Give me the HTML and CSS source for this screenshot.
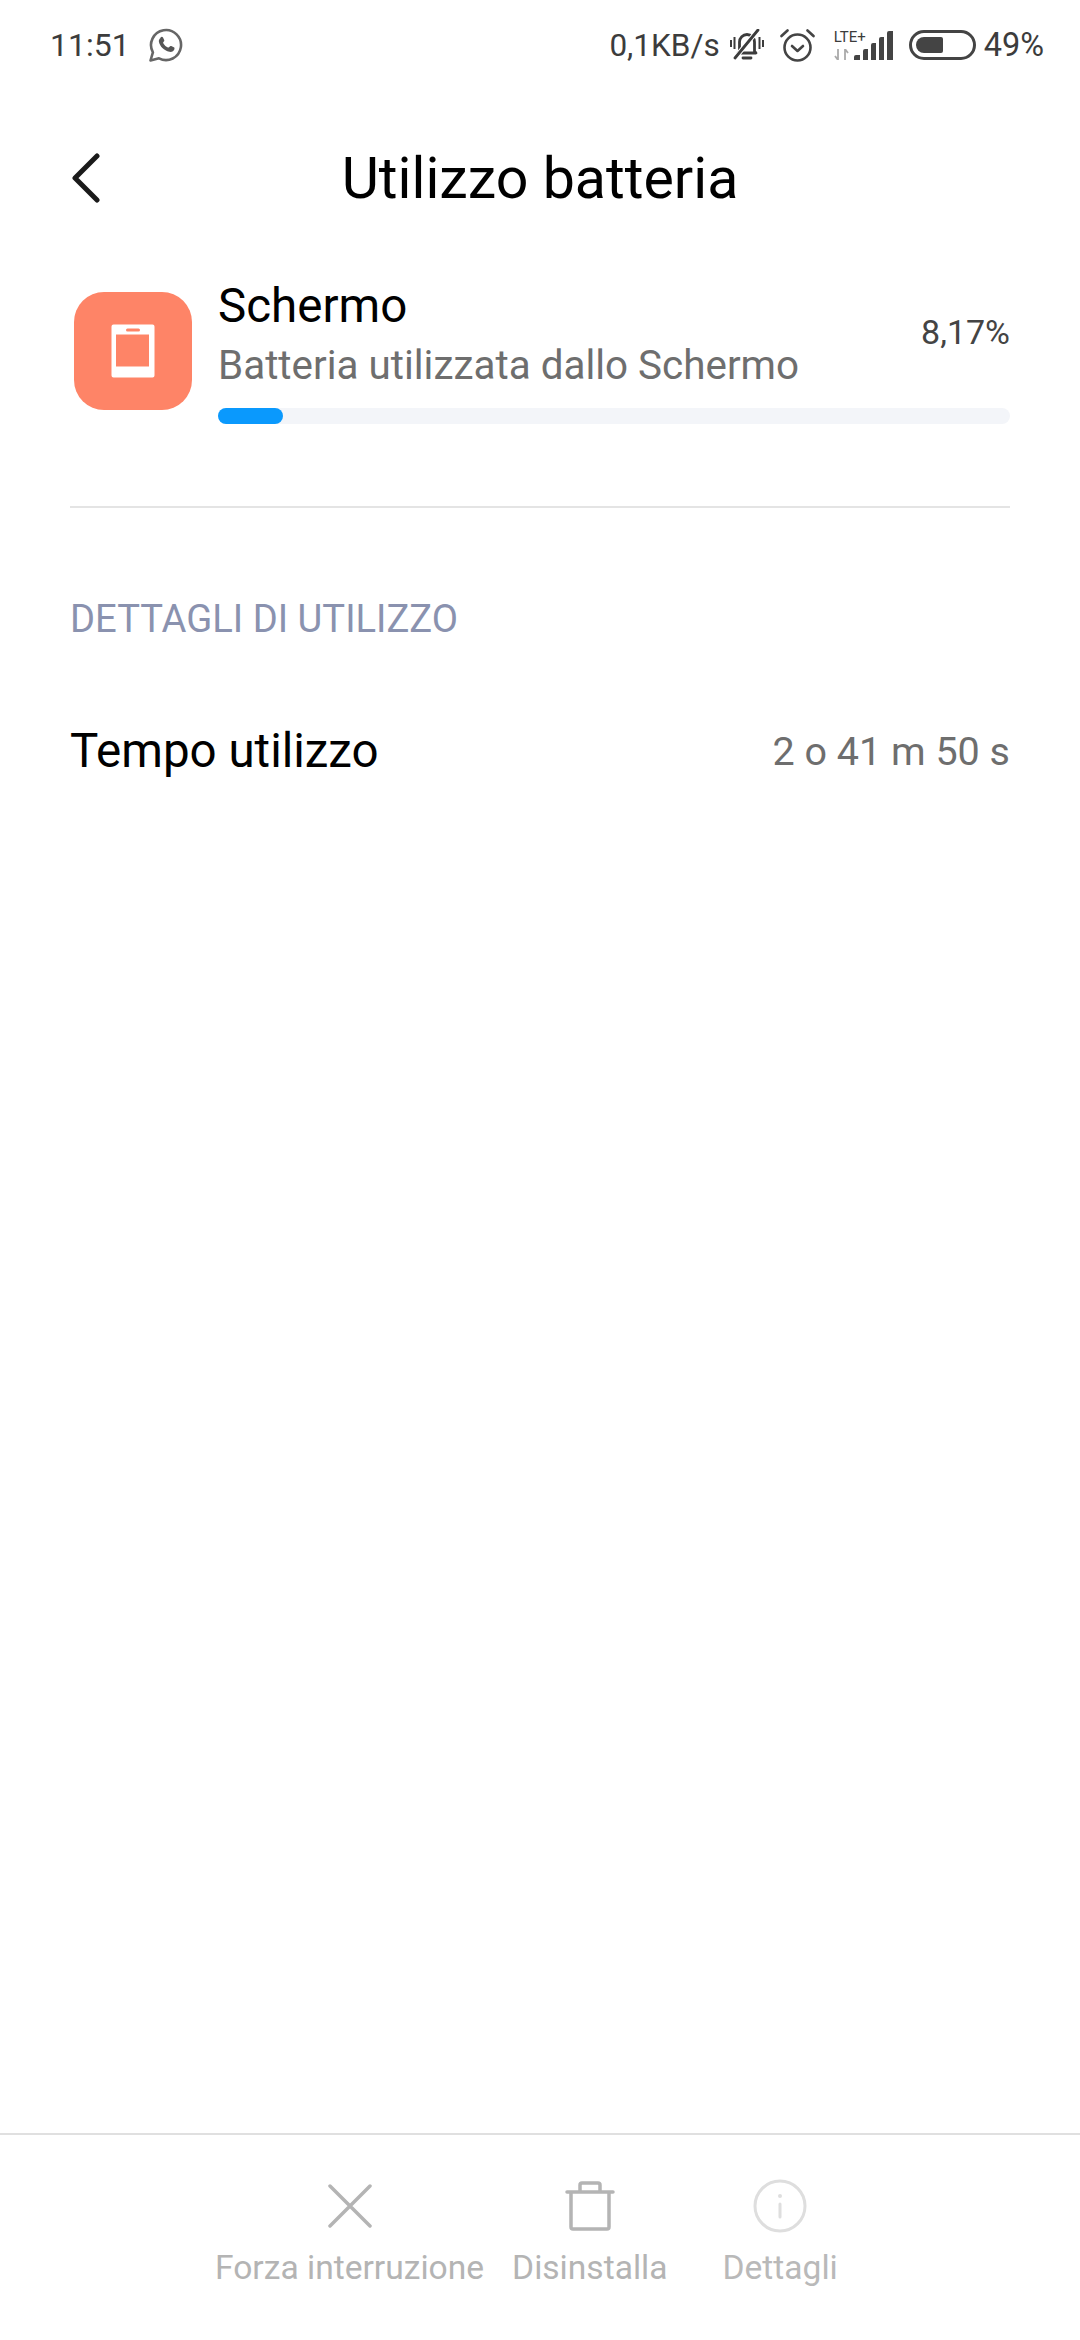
FILE: index.html
```html
<!DOCTYPE html>
<html lang="it">
<head>
    <meta charset="UTF-8">
    <title>Utilizzo batteria</title>
    <link rel="stylesheet" href="styles.css">
</head>
<body>
    <div class="status-bar">
        <div class="status-left">
            <span class="clock">11:51</span>
            <svg class="wa-icon" width="34" height="34" viewBox="0 0 34 34">
                <path d="M1.500 32.500l2.400-8.200A15 15 0 1 1 10 30.300z" fill="none" stroke="#666" stroke-width="2.600" stroke-linejoin="round"/>
                <path d="M11.500 9.500c1-1 2-.8 2.500 0l1.200 2.400c.3.700 0 1.200-.8 2.100-.4.400-.4.800 0 1.400 1.200 1.900 2.600 3.100 4.500 4 .6.300 1 .2 1.400-.3.900-1.100 1.300-1.300 2-1l2.500 1.200c.8.400.8 1 .6 2-.5 2-3 3-5 2.500-5.500-1.300-9.500-5.300-10.500-10-.3-1.600.4-3.100 1.600-3.900z" fill="#555"/>
            </svg>
        </div>
        <div class="status-right">
            <span class="speed">0,1KB/s</span>
            <svg width="34" height="32" viewBox="0 0 34 32" class="st-bell">
                <path d="M8 24l1.500-2V13a7.500 7.500 0 0 1 15 0v9l1.500 2z" fill="none" stroke="#3c3c3c" stroke-width="2.800" stroke-linejoin="round"/>
                <path d="M13 29h8" stroke="#3c3c3c" stroke-width="2.800" stroke-linecap="round"/>
                <path d="M28 1L5 29" stroke="#fff" stroke-width="5"/>
                <path d="M28 1L5 29" stroke="#3c3c3c" stroke-width="2.800" stroke-linecap="round"/>
                <path d="M1 11v7M4.500 8v12M29.500 8v12M33 11v7" stroke="#3c3c3c" stroke-width="2"/>
            </svg>
            <svg width="35" height="34" viewBox="0 0 35 34" class="st-alarm">
                <circle cx="17.500" cy="19.500" r="13" fill="none" stroke="#444" stroke-width="2.600"/>
                <path d="M12 18l5.500 5 5.500-5" fill="none" stroke="#444" stroke-width="2.600" stroke-linecap="round" stroke-linejoin="round"/>
                <path d="M1.500 8l6-5.500M33.500 8l-6-5.500" stroke="#444" stroke-width="2.600" stroke-linecap="round"/>
            </svg>
            <div class="signal">
                <div class="net">
                    <span class="lte">LTE+</span>
                    <svg width="15" height="11" viewBox="0 0 15 11"><path d="M4 0v11M4 11L1 7M11 11V0M11 0l3 4" fill="none" stroke="#aaa" stroke-width="1.800"/></svg>
                </div>
                <svg width="40" height="29" viewBox="0 0 40 29">
                    <path d="M0 29v-3q0-2 2-2h4v5zM9 29v-9q0-2 2-2h3v11zM17 29V14q0-2 2-2h3v17zM25 29V8q0-2 2-2h3v23zM33 29V2q0-2 2-2h4v29z" fill="#444"/>
                </svg>
            </div>
            <div class="battery"><div class="battery-level"></div></div>
            <span class="percent">49%</span>
        </div>
    </div>

    <div class="title-bar">
        <svg class="back" width="32" height="50" viewBox="0 0 32 50">
            <path d="M27 3L5 25l22 22" fill="none" stroke="#1a1a1a" stroke-width="5" stroke-linecap="round" stroke-linejoin="round"/>
        </svg>
        <h1>Utilizzo batteria</h1>
    </div>

    <div class="usage">
        <div class="app-icon">
            <svg width="44" height="54" viewBox="0 0 44 54">
                <path fill-rule="evenodd" d="M2 0h39a2 2 0 0 1 2 2v49a2 2 0 0 1-2 2H2a2 2 0 0 1-2-2V2a2 2 0 0 1 2-2zM4.500 10v32h33V10z M16 4a1 1 0 0 0 0 3h11a1 1 0 0 0 0-3z" transform="translate(.5 .5)" fill="#fff"/>
            </svg>
        </div>
        <div class="usage-info">
            <div class="usage-head">
                <div>
                    <div class="usage-name">Schermo</div>
                    <div class="usage-sub">Batteria utilizzata dallo Schermo</div>
                </div>
                <div class="usage-pct">8,17%</div>
            </div>
            <div class="bar"><div class="bar-fill" style="width: 8.17%"></div></div>
        </div>
    </div>

    <hr class="divider">

    <h2 class="section-title">DETTAGLI DI UTILIZZO</h2>
    <div class="row">
        <span class="row-label">Tempo utilizzo</span>
        <span class="row-value">2 o 41 m 50 s</span>
    </div>

    <div class="spacer"></div>

    <div class="actions">
        <div class="action act-stop">
            <div class="action-icon">
                <svg width="44" height="44" viewBox="0 0 44 44"><path d="M2 2l40 40M42 2L2 42" fill="none" stroke="#b4b4b4" stroke-width="3.500" stroke-linecap="round"/></svg>
            </div>
            <span>Forza interruzione</span>
        </div>
        <div class="action act-del">
            <div class="action-icon">
                <svg width="50" height="50" viewBox="0 0 50 50">
                    <path d="M2 11h46M6 11v35q0 2 2 2h34q2 0 2-2V11M15 11V4q0-2 2-2h16q2 0 2 2v7" fill="none" stroke="#b4b4b4" stroke-width="3.500" stroke-linecap="round"/>
                </svg>
            </div>
            <span>Disinstalla</span>
        </div>
        <div class="action act-info">
            <div class="action-icon">
                <svg width="54" height="54" viewBox="0 0 54 54">
                    <circle cx="27" cy="27" r="25" fill="none" stroke="#dedede" stroke-width="3"/>
                    <circle cx="27" cy="17" r="2" fill="#dedede"/>
                    <path d="M27 25v13" stroke="#dedede" stroke-width="3" stroke-linecap="round"/>
                </svg>
            </div>
            <span>Dettagli</span>
        </div>
    </div>
</body>
</html>
```

FILE: styles.css
```css
* {
    box-sizing: border-box;
}
html, body {
    margin: 0;
    height: 2340px;
}
body {
    display: flex;
    flex-direction: column;
    font-family: Roboto, 'Noto Sans', sans-serif;
    background: #fff;
    color: #000;
    overflow: hidden;
}
.status-bar {
    height: 90px;
    padding: 0 36px 0 50px;
    display: flex;
    justify-content: space-between;
    align-items: center;
    font-size: 32px;
    color: #3c3c3c;
}
.status-left, .status-right {
    display: flex;
    align-items: center;
}
.status-left {
    gap: 19px;
}
.speed {
    margin-right: 10px;
    font-size: 31.500px;
}
.st-alarm {
    margin-left: 16px;
}
.signal {
    display: flex;
    align-items: flex-end;
    margin-left: 19px;
}
.net {
    display: flex;
    flex-direction: column;
    align-items: flex-start;
    gap: 6px;
    margin-right: -13px;
    width: 33px;
}
.lte {
    font-size: 15px;
    line-height: 12px;
}
.battery {
    width: 67px;
    height: 30px;
    margin-left: 15px;
    border: 3px solid #444;
    border-radius: 15px;
    padding: 4px;
}
.battery-level {
    width: 27px;
    height: 16px;
    background: #444;
    border-radius: 8px 2px 2px 8px;
}
.percent {
    margin-left: 8px;
    font-size: 32.500px;
}
.title-bar {
    height: 176px;
    position: relative;
    display: flex;
    align-items: center;
    justify-content: center;
}
.back {
    position: absolute;
    left: 70px;
    top: 63px;
}
h1 {
    margin: 0;
    font-size: 57.300px;
    font-weight: 400;
}
.usage {
    display: flex;
    padding: 0 70px 0 74px;
    height: 240px;
}
.app-icon {
    width: 118px;
    height: 118px;
    margin-top: 26px;
    border-radius: 30px;
    background: #fe8467;
    display: flex;
    align-items: center;
    justify-content: center;
    flex-shrink: 0;
}
.usage-info {
    flex: 1;
    margin: 13px 0 0 26px;
}
.usage-head {
    display: flex;
    justify-content: space-between;
    align-items: center;
}
.usage-name {
    font-size: 47.500px;
    line-height: 54px;
}
.usage-sub {
    font-size: 40.400px;
    line-height: 44px;
    margin-top: 11px;
    color: #6e6e6e;
}
.usage-pct {
    font-size: 34px;
    margin-bottom: 4px;
    color: #444;
}
.bar {
    height: 16px;
    margin-top: 20px;
    background: #f3f5f9;
    border-radius: 8px;
}
.bar-fill {
    height: 100%;
    background: #0a99fd;
    border-radius: 8px;
}
.divider {
    margin: 0 70px;
    border: 0;
    border-top: 2px solid #e4e4e4;
}
.section-title {
    margin: 91px 70px 0;
    font-size: 38.200px;
    line-height: 40px;
    font-weight: 400;
    color: #8a92af;
}
.row {
    margin: 82px 70px 0;
    display: flex;
    justify-content: space-between;
    align-items: center;
    height: 60px;
}
.row-label {
    font-size: 47.500px;
}
.row-value {
    font-size: 39.500px;
    color: #6e6e6e;
}
.spacer {
    flex: 1;
}
.actions {
    height: 207px;
    border-top: 2px solid #e0e0e0;
    display: flex;
    padding: 44px 0 0 215px;
    font-size: 33.600px;
    color: #b4b4b4;
}
.action {
    display: flex;
    flex-direction: column;
    align-items: center;
    gap: 15px;
}
.action span {
    line-height: 40px;
    white-space: nowrap;
}
.action-icon {
    height: 54px;
    display: flex;
    align-items: center;
}
.act-del {
    margin-left: 28px;
}
.act-info {
    margin-left: 55px;
    color: #b9b9b9;
}
```
